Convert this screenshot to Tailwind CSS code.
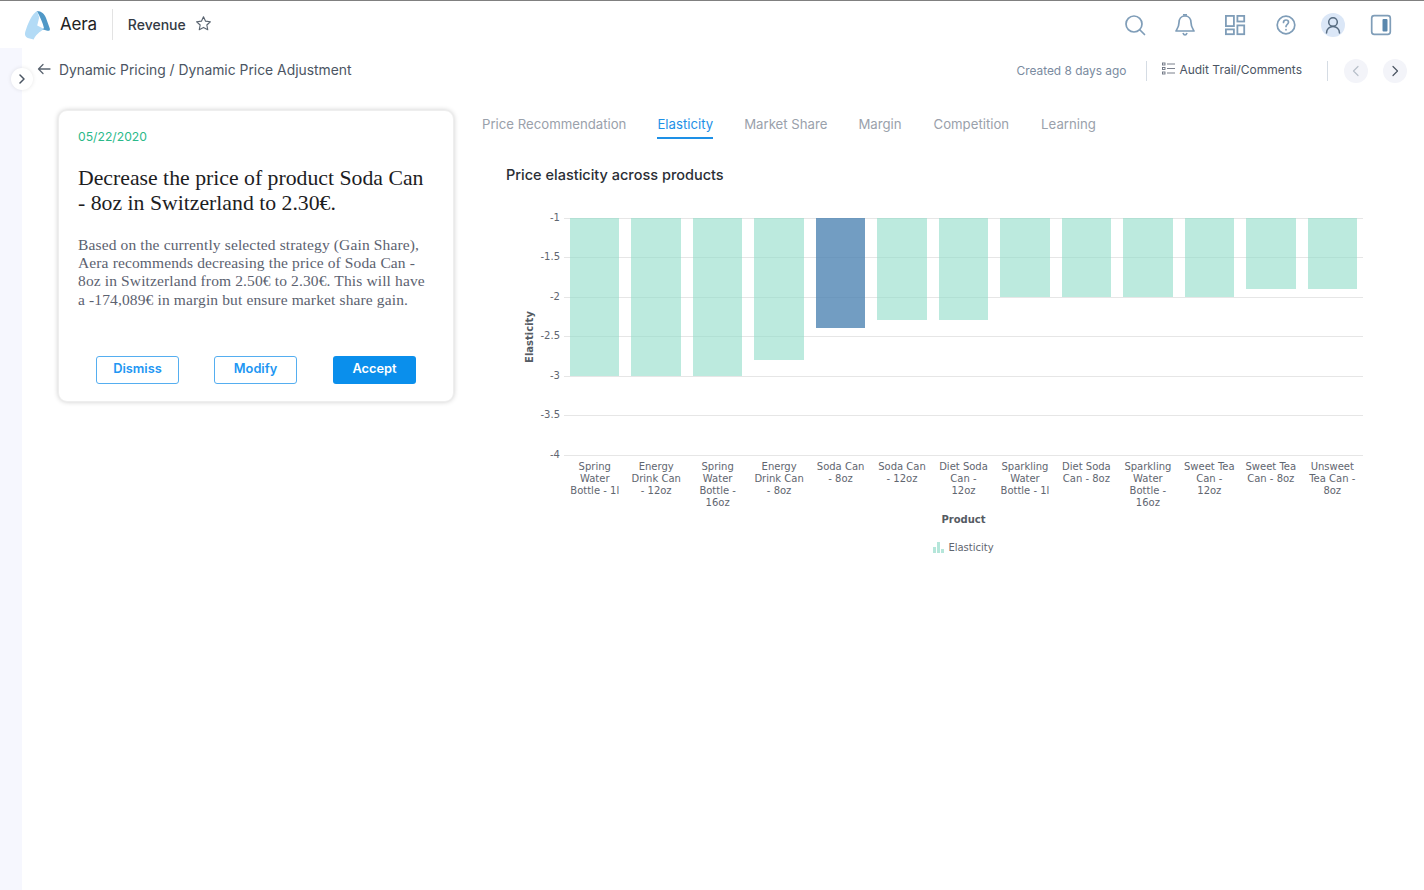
<!DOCTYPE html>
<html>
<head>
<meta charset="utf-8">
<script src="https://cdn.jsdelivr.net/npm/@tailwindcss/browser@4"></script>
</head>
<body class="bg-white font-['Inter',sans-serif]">
<div class="relative w-[1424px] h-[890px] overflow-hidden bg-white border-t border-[#808080]">
  <header class="h-[47px] flex items-center justify-between pl-[24px] pr-[32px]">
    <div class="flex items-center">
      <svg class="w-[27px] h-[30px]" viewBox="0 0 27 30"><path d="M13 1C8 4 4 13 1.200 22c-.8 3 .3 5 2.500 6l6 1.500c1.500-4 6-8 10.500-10.500l-7-3.500 2-8z" fill="#b3dbf6"/><path d="M13 1c4.500 0 7.500 3 9 7l3.800 10.500c.5 2-.5 2.500-2.500 2.200l-5-1.500 1.700-1c-1-5-4-11-7-17.200z" fill="#4f98c7"/></svg>
      <span class="ml-[9px] text-[17px] text-[#222] leading-none tracking-[-0.2px]">Aera</span>
      <div class="ml-[15px] w-px h-[31px] bg-[#e3e3e3]"></div>
      <span class="ml-[15px] text-[14px] font-medium text-[#333a44] leading-none">Revenue</span>
      <svg class="ml-[9px] -mt-[3px] w-[17px] h-[17px]" viewBox="0 0 24 24" fill="none" stroke="#5a6470" stroke-width="1.600" stroke-linejoin="round"><path d="M12 2.500l2.900 6.200 6.800.8-5 4.600 1.300 6.700-6-3.300-6 3.300 1.300-6.700-5-4.600 6.800-.8z"/></svg>
    </div>
    <div class="flex items-center gap-[26px]">
      <svg class="w-[24px] h-[24px]" viewBox="0 0 24 24" fill="none" stroke="#7f9db8" stroke-width="1.700" stroke-linecap="round"><circle cx="11" cy="11" r="8"/><path d="M17 17l4.500 4.500"/></svg>
      <svg class="w-[24px] h-[24px]" viewBox="0 0 24 24" fill="none" stroke="#7f9db8" stroke-width="1.700" stroke-linejoin="round"><path d="M12 3c-4 0-6 3-6 6.500 0 5-2.500 7-3 8.500h18c-.5-1.500-3-3.500-3-8.500 0-3.500-2-6.500-6-6.500z"/><path d="M10 1.800h4M10 20c.5 1.300 1 2 2 2s1.500-.7 2-2"/></svg>
      <svg class="w-[24px] h-[24px]" viewBox="0 0 24 24" fill="none" stroke="#7f9db8" stroke-width="1.800"><rect x="2.900" y="2.900" width="8" height="10.200"/><rect x="14.400" y="2.900" width="6.800" height="5.600"/><rect x="2.900" y="16.400" width="8" height="4.800"/><rect x="14.400" y="12.400" width="6.800" height="8.800"/></svg>
      <svg class="ml-[1px] w-[24px] h-[24px]" viewBox="0 0 24 24" fill="none" stroke="#7f9db8" stroke-width="1.700" stroke-linecap="round"><circle cx="12" cy="12" r="8.800"/><path d="M9.500 9.500c0-1.500 1-2.500 2.500-2.500s2.500 1 2.500 2.300c0 2-2.500 2-2.500 4.200"/><path d="M12 16.500v.3"/></svg>
      <div class="-ml-[3px] w-[24px] h-[24px] rounded-full bg-[#dbe7f7] flex items-center justify-center"><svg class="w-[20px] h-[20px]" viewBox="0 0 20 20" fill="none" stroke="#566b80" stroke-width="1.500" stroke-linecap="round"><circle cx="10" cy="7" r="4.300"/><path d="M3.500 18c0-4 3-6.500 6.500-6.500s6.500 2.500 6.500 6.500"/></svg></div>
      <svg class="-ml-[1px] w-[22px] h-[22px]" viewBox="0 0 22 22" fill="none"><rect x="1.700" y="1.700" width="18.600" height="18.600" rx="2.500" stroke="#7f9db8" stroke-width="1.700"/><rect x="12.500" y="5" width="5" height="12.500" rx="1" fill="#5a87ad"/></svg>
    </div>
  </header>

  <div class="flex h-[842px]">
    <aside class="w-[22px] bg-[#f6f7fe] shrink-0"></aside>
    <main class="flex-1 min-w-0">
      <div class="h-[62px] flex items-start justify-between pr-[17px] pt-[10px]">
        <div class="flex items-center pl-[15px] h-[25px]">
          <svg class="w-[14px] h-[14px] -mt-[3px]" viewBox="0 0 14 14" fill="none" stroke="#5a6470" stroke-width="1.300" stroke-linecap="round" stroke-linejoin="round"><path d="M13 7H1.500M6 2.500L1.500 7 6 11.500"/></svg>
          <span class="ml-[8px] text-[13.860px] text-[#4b5563] leading-none">Dynamic Pricing / Dynamic Price Adjustment</span>
        </div>
        <div class="flex items-center h-[25px]">
          <span class="text-[11.900px] text-[#7a8ba0] leading-none mt-[1px]">Created 8 days ago</span>
          <div class="ml-[20px] w-px h-[20px] bg-[#d5dce4]"></div>
          <svg class="ml-[15px] -mt-[4px] w-[13px] h-[13px]" viewBox="0 0 13 13" fill="none" stroke="#6b7280" stroke-width="0.900"><rect x="0.500" y="1" width="2.500" height="2"/><rect x="0.500" y="5.500" width="2.500" height="2"/><rect x="0.500" y="10" width="2.500" height="2"/><path d="M5 2h8M5 6.500h8M5 11h8"/></svg>
          <span class="ml-[4px] -mt-[1px] text-[12px] text-[#4b5563] leading-none">Audit Trail/Comments</span>
          <div class="ml-[25px] w-px h-[20px] bg-[#d5dce4]"></div>
          <div class="ml-[16px] w-[24px] h-[24px] rounded-full bg-[#f3f4f9] flex items-center justify-center"><svg class="w-[12px] h-[12px]" viewBox="0 0 12 12" fill="none" stroke="#b8c0ca" stroke-width="1.200" stroke-linecap="round" stroke-linejoin="round"><path d="M8 1.500L3.500 6 8 10.500"/></svg></div>
          <div class="ml-[15px] w-[24px] h-[24px] rounded-full bg-[#f3f4f9] flex items-center justify-center"><svg class="w-[12px] h-[12px]" viewBox="0 0 12 12" fill="none" stroke="#4b5563" stroke-width="1.200" stroke-linecap="round" stroke-linejoin="round"><path d="M4 1.500L8.500 6 4 10.500"/></svg></div>
        </div>
      </div>

      <div class="flex items-start">
        <section class="ml-[36px] w-[396px] h-[292px] shrink-0 rounded-[9px] bg-white border border-[#eeeeee] shadow-[0_0_5px_rgba(0,0,0,0.2)] px-[19px] pt-[19px]">
          <div class="text-[12.200px] leading-[14px] text-[#2bb98a]">05/22/2020</div>
          <h2 class="mt-[22px] font-['Liberation_Serif',serif] text-[21.750px] leading-[25px] text-[#1d1d1f] w-[352px]">Decrease the price of product Soda Can - 8oz in Switzerland to 2.30€.</h2>
          <p class="mt-[20px] font-['Liberation_Serif',serif] text-[15.500px] tracking-[0.13px] leading-[18.200px] text-[#5c6270] w-[355px]">Based on the currently selected strategy (Gain Share), Aera recommends decreasing the price of Soda Can - 8oz in Switzerland from 2.50€ to 2.30€. This will have a -174,089€ in margin but ensure market share gain.</p>
          <div class="mt-[47px] pl-[18px] flex gap-[35px]">
            <button class="w-[83px] h-[28px] rounded-[3px] border border-[#55aef0] text-[12.800px] font-semibold text-[#2196f3] leading-none">Dismiss</button>
            <button class="w-[83px] h-[28px] rounded-[3px] border border-[#55aef0] text-[12.800px] font-semibold text-[#2196f3] leading-none">Modify</button>
            <button class="ml-px w-[83px] h-[28px] rounded-[3px] bg-[#0a8fec] text-[12.800px] font-semibold text-white leading-none">Accept</button>
          </div>
        </section>

        <section class="flex-1 min-w-0 ml-[28px]">
          <nav class="flex gap-[31px] text-[13.200px] leading-none text-[#9aa1ab] h-[29px]">
            <span class="pt-[8px]">Price Recommendation</span>
            <span class="pt-[8px] h-[29px] text-[#1e90e6] border-b-2 border-[#1e90e6]">Elasticity</span>
            <span class="pt-[8px]">Market Share</span>
            <span class="pt-[8px]">Margin</span>
            <span class="pt-[8px] ml-px">Competition</span>
            <span class="pt-[8px] ml-px">Learning</span>
          </nav>
          <h3 class="ml-[24px] mt-[29px] text-[14.500px] leading-none font-medium text-[#2a2e35]">Price elasticity across products</h3>

          <div class="relative ml-[82px] mt-[35px] w-[799px] h-[238px] font-['DejaVu_Sans',sans-serif] text-[10px] text-[#5f6670]">
            <div class="absolute inset-0 flex flex-col justify-between">
              <div class="relative h-px bg-[#e6e6e6]"><span class="absolute right-[803px] -top-[5px] leading-none">-1</span></div>
              <div class="relative h-px bg-[#e6e6e6]"><span class="absolute right-[803px] -top-[5px] leading-none">-1.5</span></div>
              <div class="relative h-px bg-[#e6e6e6]"><span class="absolute right-[803px] -top-[5px] leading-none">-2</span></div>
              <div class="relative h-px bg-[#e6e6e6]"><span class="absolute right-[803px] -top-[5px] leading-none">-2.5</span></div>
              <div class="relative h-px bg-[#e6e6e6]"><span class="absolute right-[803px] -top-[5px] leading-none">-3</span></div>
              <div class="relative h-px bg-[#e6e6e6]"><span class="absolute right-[803px] -top-[5px] leading-none">-3.5</span></div>
              <div class="relative h-px bg-[#e6e6e6]"><span class="absolute right-[803px] -top-[5px] leading-none">-4</span></div>
            </div>
            <div class="absolute -left-[60px] top-[114px] -rotate-90 font-bold text-[#555b63] leading-none origin-center">Elasticity</div>
            <div class="absolute inset-0 grid grid-cols-13 items-start">
              <div class="mx-[6px] h-[158px] bg-[#8fdcc8]/60"></div>
              <div class="mx-[6px] h-[158px] bg-[#8fdcc8]/60"></div>
              <div class="mx-[6px] h-[158px] bg-[#8fdcc8]/60"></div>
              <div class="mx-[6px] h-[142px] bg-[#8fdcc8]/60"></div>
              <div class="mx-[6px] h-[110px] bg-[#4f85b3]/80"></div>
              <div class="mx-[6px] h-[102px] bg-[#8fdcc8]/60"></div>
              <div class="mx-[6px] h-[102px] bg-[#8fdcc8]/60"></div>
              <div class="mx-[6px] h-[79px] bg-[#8fdcc8]/60"></div>
              <div class="mx-[6px] h-[79px] bg-[#8fdcc8]/60"></div>
              <div class="mx-[6px] h-[79px] bg-[#8fdcc8]/60"></div>
              <div class="mx-[6px] h-[79px] bg-[#8fdcc8]/60"></div>
              <div class="mx-[6px] h-[71px] bg-[#8fdcc8]/60"></div>
              <div class="mx-[6px] h-[71px] bg-[#8fdcc8]/60"></div>
            </div>
          </div>
          <div class="ml-[82px] mt-[5px] w-[799px] grid grid-cols-13 font-['DejaVu_Sans',sans-serif] text-[10px] leading-[12px] text-[#5f6670] text-center h-[48px]">
            <div class="px-[5px]">Spring Water Bottle - 1l</div>
            <div class="px-[5px]">Energy Drink Can - 12oz</div>
            <div class="px-[5px]">Spring Water Bottle - 16oz</div>
            <div class="px-[5px]">Energy Drink Can - 8oz</div>
            <div class="px-[5px]">Soda Can - 8oz</div>
            <div class="px-[5px]">Soda Can - 12oz</div>
            <div class="px-[5px]">Diet Soda Can - 12oz</div>
            <div class="px-[5px]">Sparkling Water Bottle - 1l</div>
            <div class="px-[5px]">Diet Soda Can - 8oz</div>
            <div class="px-[5px]">Sparkling Water Bottle - 16oz</div>
            <div class="px-[5px]">Sweet Tea Can - 12oz</div>
            <div class="px-[5px]">Sweet Tea Can - 8oz</div>
            <div class="px-[5px]">Unsweet Tea Can - 8oz</div>
          </div>
          <div class="ml-[82px] w-[799px] font-['DejaVu_Sans',sans-serif] text-center">
            <div class="mt-[5px] text-[10px] leading-[12px] font-bold text-[#555b63]">Product</div>
            <div class="mt-[16px] flex items-center justify-center gap-[3px] text-[10px] leading-[12px] text-[#5f6670]">
              <svg class="w-[12px] h-[11px]" viewBox="0 0 12 11" fill="#b5e6da"><rect x="0" y="5" width="3" height="6"/><rect x="4" y="0" width="3" height="11"/><rect x="8" y="7" width="3" height="4"/></svg>
              <span>Elasticity</span>
            </div>
          </div>
        </section>
      </div>
    </main>
  </div>
  <div class="absolute left-[11px] top-[67px] w-[22px] h-[22px] rounded-full bg-white shadow-[0_0_4px_rgba(0,0,0,0.1)] flex items-center justify-center">
    <svg class="w-[12px] h-[12px]" viewBox="0 0 12 12" fill="none" stroke="#4b5563" stroke-width="1.500" stroke-linecap="round" stroke-linejoin="round"><path d="M4 2l4 4-4 4"/></svg>
  </div>
</div>
</body>
</html>
